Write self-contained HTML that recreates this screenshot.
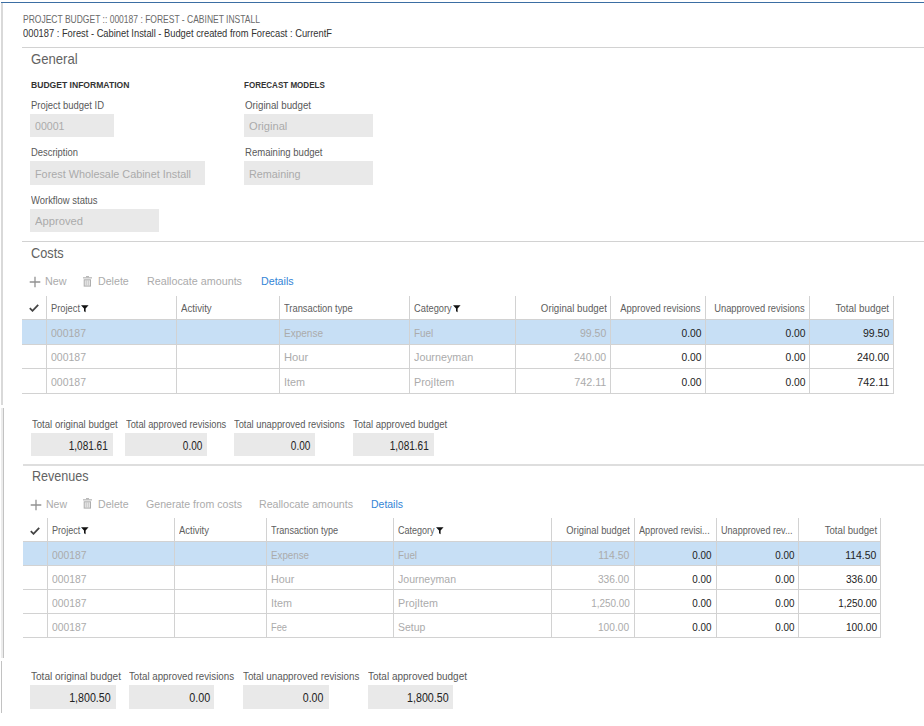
<!DOCTYPE html>
<html lang="en"><head><meta charset="utf-8"><title>Project budget :: 000187 : Forest - Cabinet Install</title>
<style>
html,body{margin:0;padding:0;background:#fff;}
body{width:924px;height:726px;position:relative;overflow:hidden;font-family:"Liberation Sans",Arial,sans-serif;}
.b{position:absolute;}
.t{position:absolute;white-space:nowrap;line-height:1;display:inline-block;}
.l{transform-origin:0 50%;}
.r{transform-origin:100% 50%;}
</style></head><body>
<div aria-label="Form frame">
<div class="b" style="left:1px;top:2px;width:923px;height:1px;background:#3b6ea3;"></div>
<div class="b" style="left:1px;top:3px;width:2px;height:402px;background:#d9d9d9;"></div>
<div class="b" style="left:1px;top:408px;width:2px;height:250px;background:#ececec;"></div>
<div class="b" style="left:3px;top:408px;width:1px;height:250px;background:#c2c2c2;"></div>
<div class="b" style="left:1px;top:661px;width:1px;height:52px;background:#c2c2c2;"></div>
</div>
<header aria-label="Project budget title">
<span id="t0" class="t l" style="font-size:10.3px;color:#6a6a6a;top:15px;left:22.50px;transform:scaleX(0.8261);">PROJECT BUDGET :: 000187 : FOREST - CABINET INSTALL</span>
<span id="t1" class="t l" style="font-size:10.3px;color:#333;top:29px;left:22.50px;transform:scaleX(0.9059);">000187 : Forest - Cabinet Install - Budget created from Forecast : CurrentF</span>
<div class="b" style="left:22px;top:47px;width:902px;height:1px;background:#d2d2d2;"></div>
</header>
<section aria-label="General">
<span id="t2" class="t l" style="font-size:15px;color:#626262;top:51px;left:30.80px;transform:scaleX(0.8749);">General</span>
<span id="t3" class="t l" style="font-size:9.5px;color:#333;top:80px;font-weight:700;left:30.80px;transform:scaleX(0.9021);">BUDGET INFORMATION</span>
<span id="t4" class="t l" style="font-size:9.5px;color:#333;top:80px;font-weight:700;left:244.20px;transform:scaleX(0.8458);">FORECAST MODELS</span>
<span id="t5" class="t l" style="font-size:10px;color:#595959;top:101px;left:30.50px;transform:scaleX(0.9448);">Project budget ID</span>
<div class="b" style="left:30px;top:114px;width:84px;height:23px;background:#e9e9e9;"></div>
<span id="t6" class="t l" style="font-size:11px;color:#ababab;top:121px;left:35.20px;transform:scaleX(0.9642);">00001</span>
<span id="t7" class="t l" style="font-size:10px;color:#595959;top:148px;left:30.50px;transform:scaleX(0.9394);">Description</span>
<div class="b" style="left:30px;top:161px;width:175px;height:24px;background:#e9e9e9;"></div>
<span id="t8" class="t l" style="font-size:11px;color:#ababab;top:169px;left:35.20px;transform:scaleX(0.9851);">Forest Wholesale Cabinet Install</span>
<span id="t9" class="t l" style="font-size:10px;color:#595959;top:196px;left:30.50px;transform:scaleX(0.9447);">Workflow status</span>
<div class="b" style="left:30px;top:209px;width:129px;height:23px;background:#e9e9e9;"></div>
<span id="t10" class="t l" style="font-size:11px;color:#ababab;top:216px;left:35.20px;transform:scaleX(1.0192);">Approved</span>
<span id="t11" class="t l" style="font-size:10px;color:#595959;top:101px;left:244.50px;transform:scaleX(0.9730);">Original budget</span>
<div class="b" style="left:244px;top:114px;width:129px;height:23px;background:#e9e9e9;"></div>
<span id="t12" class="t l" style="font-size:11px;color:#ababab;top:121px;left:249.20px;transform:scaleX(1.0104);">Original</span>
<span id="t13" class="t l" style="font-size:10px;color:#595959;top:148px;left:244.50px;transform:scaleX(0.9548);">Remaining budget</span>
<div class="b" style="left:244px;top:161px;width:129px;height:24px;background:#e9e9e9;"></div>
<span id="t14" class="t l" style="font-size:11px;color:#ababab;top:169px;left:249.20px;transform:scaleX(0.9811);">Remaining</span>
<div class="b" style="left:22px;top:241px;width:902px;height:1px;background:#d2d2d2;"></div>
</section>
<section aria-label="Costs">
<span id="t15" class="t l" style="font-size:15px;color:#626262;top:245px;left:30.70px;transform:scaleX(0.8502);">Costs</span>
<svg class="b" style="left:28.700000000000003px;top:275.5px" width="12" height="12" viewBox="0 0 12 12"><path d="M6 0.7V11.3M0.7 6H11.3" stroke="#929292" stroke-width="1.3" fill="none"/></svg>
<span id="t16" class="t l" style="font-size:11px;color:#ababab;top:276px;left:45.10px;transform:scaleX(0.9811);">New</span>
<svg class="b" style="left:83.2px;top:275.5px" width="9" height="11" viewBox="0 0 9 11"><path d="M3 0h3v1.2H3z" fill="#b9b9b9"/><path d="M0 1.3h9v1.1H0z" fill="#adadad"/><rect x="1.2" y="3.8" width="6.3" height="6.3" fill="#e6e6e6" stroke="#adadad" stroke-width="1"/><path d="M3.3 4.3v5.3M5.4 4.3v5.3" stroke="#c4c4c4" stroke-width="0.8"/></svg>
<span id="t17" class="t l" style="font-size:11px;color:#ababab;top:276px;left:98.00px;transform:scaleX(0.9686);">Delete</span>
<span id="t18" class="t l" style="font-size:11px;color:#ababab;top:276px;left:147.30px;transform:scaleX(0.9770);">Reallocate amounts</span>
<span id="t19" class="t l" style="font-size:11px;color:#3384d6;top:276px;left:260.70px;transform:scaleX(0.9695);">Details</span>
<div class="b" style="left:22px;top:319px;width:872px;height:25px;background:#c7dff5;"></div>
<div class="b" style="left:22px;top:319px;width:872px;height:1px;background:#d2d2d2;"></div>
<div class="b" style="left:22px;top:344px;width:872px;height:1px;background:#d2d2d2;"></div>
<div class="b" style="left:22px;top:368px;width:872px;height:1px;background:#d2d2d2;"></div>
<div class="b" style="left:22px;top:393px;width:872px;height:1px;background:#d2d2d2;"></div>
<div class="b" style="left:46px;top:296px;width:1px;height:98px;background:#d2d2d2;"></div>
<div class="b" style="left:176px;top:296px;width:1px;height:98px;background:#d2d2d2;"></div>
<div class="b" style="left:279px;top:296px;width:1px;height:98px;background:#d2d2d2;"></div>
<div class="b" style="left:409px;top:296px;width:1px;height:98px;background:#d2d2d2;"></div>
<div class="b" style="left:515px;top:296px;width:1px;height:98px;background:#d2d2d2;"></div>
<div class="b" style="left:610px;top:296px;width:1px;height:98px;background:#d2d2d2;"></div>
<div class="b" style="left:705px;top:296px;width:1px;height:98px;background:#d2d2d2;"></div>
<div class="b" style="left:809px;top:296px;width:1px;height:98px;background:#d2d2d2;"></div>
<div class="b" style="left:893px;top:296px;width:1px;height:98px;background:#d2d2d2;"></div>
<svg class="b" style="left:29.2px;top:304px" width="10" height="8" viewBox="0 0 10 8"><path d="M0.8 4.2 L3.5 6.8 L9.2 0.8" stroke="#444" stroke-width="1.8" fill="none"/></svg>
<span id="t20" class="t l" style="font-size:10.3px;color:#606060;top:304px;left:51.00px;transform:scaleX(0.9045);">Project</span>
<svg class="b" style="left:81.2px;top:304.9px" width="8" height="8" viewBox="0 0 8 8"><path d="M0 0.2H7.6L4.6 3.6V7.2L3 6.2V3.6Z" fill="#111"/></svg>
<span id="t21" class="t l" style="font-size:10.3px;color:#606060;top:304px;left:181.00px;transform:scaleX(0.9410);">Activity</span>
<span id="t22" class="t l" style="font-size:10.3px;color:#606060;top:304px;left:284.30px;transform:scaleX(0.9069);">Transaction type</span>
<span id="t23" class="t l" style="font-size:10.3px;color:#606060;top:304px;left:414.00px;transform:scaleX(0.9023);">Category</span>
<svg class="b" style="left:452.6px;top:304.9px" width="8" height="8" viewBox="0 0 8 8"><path d="M0 0.2H7.6L4.6 3.6V7.2L3 6.2V3.6Z" fill="#111"/></svg>
<span id="t24" class="t r" style="font-size:10.3px;color:#606060;top:304px;right:317.50px;transform:scaleX(0.9450);">Original budget</span>
<span id="t25" class="t r" style="font-size:10.3px;color:#606060;top:304px;right:223.00px;transform:scaleX(0.9169);">Approved revisions</span>
<span id="t26" class="t r" style="font-size:10.3px;color:#606060;top:304px;right:119.30px;transform:scaleX(0.9077);">Unapproved revisions</span>
<span id="t27" class="t r" style="font-size:10.3px;color:#606060;top:304px;right:34.80px;transform:scaleX(0.9571);">Total budget</span>
<span id="t28" class="t l" style="font-size:10.5px;color:#ababab;top:328px;left:51.00px;transform:scaleX(0.9987);">000187</span>
<span id="t29" class="t l" style="font-size:10.5px;color:#ababab;top:328px;left:284.30px;transform:scaleX(0.9541);">Expense</span>
<span id="t30" class="t l" style="font-size:10.5px;color:#ababab;top:328px;left:414.00px;transform:scaleX(0.9443);">Fuel</span>
<span id="t31" class="t r" style="font-size:10.5px;color:#ababab;top:328px;right:317.50px;transform:scaleX(1.0007);">99.50</span>
<span id="t32" class="t r" style="font-size:10.5px;color:#222;top:328px;right:223.00px;transform:scaleX(0.9786);">0.00</span>
<span id="t33" class="t r" style="font-size:10.5px;color:#222;top:328px;right:119.00px;transform:scaleX(0.9786);">0.00</span>
<span id="t34" class="t r" style="font-size:10.5px;color:#222;top:328px;right:34.80px;transform:scaleX(1.0007);">99.50</span>
<span id="t35" class="t l" style="font-size:10.5px;color:#ababab;top:352px;left:51.00px;transform:scaleX(0.9987);">000187</span>
<span id="t36" class="t l" style="font-size:10.5px;color:#ababab;top:352px;left:284.30px;transform:scaleX(1.0674);">Hour</span>
<span id="t37" class="t l" style="font-size:10.5px;color:#ababab;top:352px;left:414.00px;transform:scaleX(1.0263);">Journeyman</span>
<span id="t38" class="t r" style="font-size:10.5px;color:#ababab;top:352px;right:317.50px;transform:scaleX(1.0023);">240.00</span>
<span id="t39" class="t r" style="font-size:10.5px;color:#222;top:352px;right:223.00px;transform:scaleX(0.9786);">0.00</span>
<span id="t40" class="t r" style="font-size:10.5px;color:#222;top:352px;right:119.00px;transform:scaleX(0.9786);">0.00</span>
<span id="t41" class="t r" style="font-size:10.5px;color:#222;top:352px;right:34.80px;transform:scaleX(1.0023);">240.00</span>
<span id="t42" class="t l" style="font-size:10.5px;color:#ababab;top:377px;left:51.00px;transform:scaleX(0.9987);">000187</span>
<span id="t43" class="t l" style="font-size:10.5px;color:#ababab;top:377px;left:284.30px;transform:scaleX(1.0283);">Item</span>
<span id="t44" class="t l" style="font-size:10.5px;color:#ababab;top:377px;left:414.00px;transform:scaleX(1.0309);">ProjItem</span>
<span id="t45" class="t r" style="font-size:10.5px;color:#ababab;top:377px;right:317.50px;transform:scaleX(1.0273);">742.11</span>
<span id="t46" class="t r" style="font-size:10.5px;color:#222;top:377px;right:223.00px;transform:scaleX(0.9786);">0.00</span>
<span id="t47" class="t r" style="font-size:10.5px;color:#222;top:377px;right:119.00px;transform:scaleX(0.9786);">0.00</span>
<span id="t48" class="t r" style="font-size:10.5px;color:#222;top:377px;right:34.80px;transform:scaleX(1.0273);">742.11</span>
<span id="t49" class="t l" style="font-size:10px;color:#595959;top:420px;left:31.60px;transform:scaleX(0.9574);">Total original budget</span>
<div class="b" style="left:31px;top:433px;width:82px;height:23px;background:#e9e9e9;"></div>
<span id="t50" class="t r" style="font-size:12px;color:#222;top:440px;right:816.30px;transform:scaleX(0.8348);">1,081.61</span>
<span id="t51" class="t l" style="font-size:10px;color:#595959;top:420px;left:125.50px;transform:scaleX(0.9291);">Total approved revisions</span>
<div class="b" style="left:125px;top:433px;width:82px;height:23px;background:#e9e9e9;"></div>
<span id="t52" class="t r" style="font-size:12px;color:#222;top:440px;right:722.00px;transform:scaleX(0.8348);">0.00</span>
<span id="t53" class="t l" style="font-size:10px;color:#595959;top:420px;left:234.00px;transform:scaleX(0.9297);">Total unapproved revisions</span>
<div class="b" style="left:234px;top:433px;width:81px;height:23px;background:#e9e9e9;"></div>
<span id="t54" class="t r" style="font-size:12px;color:#222;top:440px;right:614.00px;transform:scaleX(0.8348);">0.00</span>
<span id="t55" class="t l" style="font-size:10px;color:#595959;top:420px;left:353.10px;transform:scaleX(0.9508);">Total approved budget</span>
<div class="b" style="left:353px;top:433px;width:81px;height:23px;background:#e9e9e9;"></div>
<span id="t56" class="t r" style="font-size:12px;color:#222;top:440px;right:494.90px;transform:scaleX(0.8348);">1,081.61</span>
<div class="b" style="left:23px;top:464px;width:901px;height:2px;background:#dedede;"></div>
</section>
<section aria-label="Revenues">
<span id="t57" class="t l" style="font-size:15px;color:#626262;top:468px;left:31.70px;transform:scaleX(0.8379);">Revenues</span>
<svg class="b" style="left:29.5px;top:498.5px" width="12" height="12" viewBox="0 0 12 12"><path d="M6 0.7V11.3M0.7 6H11.3" stroke="#929292" stroke-width="1.3" fill="none"/></svg>
<span id="t58" class="t l" style="font-size:11px;color:#ababab;top:499px;left:45.70px;transform:scaleX(0.9539);">New</span>
<svg class="b" style="left:83.4px;top:498.2px" width="9" height="11" viewBox="0 0 9 11"><path d="M3 0h3v1.2H3z" fill="#b9b9b9"/><path d="M0 1.3h9v1.1H0z" fill="#adadad"/><rect x="1.2" y="3.8" width="6.3" height="6.3" fill="#e6e6e6" stroke="#adadad" stroke-width="1"/><path d="M3.3 4.3v5.3M5.4 4.3v5.3" stroke="#c4c4c4" stroke-width="0.8"/></svg>
<span id="t59" class="t l" style="font-size:11px;color:#ababab;top:499px;left:97.70px;transform:scaleX(0.9624);">Delete</span>
<span id="t60" class="t l" style="font-size:11px;color:#ababab;top:499px;left:145.70px;transform:scaleX(0.9633);">Generate from costs</span>
<span id="t61" class="t l" style="font-size:11px;color:#ababab;top:499px;left:259.30px;transform:scaleX(0.9667);">Reallocate amounts</span>
<span id="t62" class="t l" style="font-size:11px;color:#3384d6;top:499px;left:370.70px;transform:scaleX(0.9517);">Details</span>
<div class="b" style="left:23px;top:541px;width:858px;height:24px;background:#c7dff5;"></div>
<div class="b" style="left:23px;top:541px;width:858px;height:1px;background:#d2d2d2;"></div>
<div class="b" style="left:23px;top:565px;width:858px;height:1px;background:#d2d2d2;"></div>
<div class="b" style="left:23px;top:589px;width:858px;height:1px;background:#d2d2d2;"></div>
<div class="b" style="left:23px;top:613px;width:858px;height:1px;background:#d2d2d2;"></div>
<div class="b" style="left:23px;top:637px;width:858px;height:1px;background:#d2d2d2;"></div>
<div class="b" style="left:47px;top:518px;width:1px;height:120px;background:#d2d2d2;"></div>
<div class="b" style="left:174px;top:518px;width:1px;height:120px;background:#d2d2d2;"></div>
<div class="b" style="left:266px;top:518px;width:1px;height:120px;background:#d2d2d2;"></div>
<div class="b" style="left:393px;top:518px;width:1px;height:120px;background:#d2d2d2;"></div>
<div class="b" style="left:551px;top:518px;width:1px;height:120px;background:#d2d2d2;"></div>
<div class="b" style="left:634px;top:518px;width:1px;height:120px;background:#d2d2d2;"></div>
<div class="b" style="left:716px;top:518px;width:1px;height:120px;background:#d2d2d2;"></div>
<div class="b" style="left:798px;top:518px;width:1px;height:120px;background:#d2d2d2;"></div>
<div class="b" style="left:880px;top:518px;width:1px;height:120px;background:#d2d2d2;"></div>
<svg class="b" style="left:30.2px;top:526.6px" width="10" height="8" viewBox="0 0 10 8"><path d="M0.8 4.2 L3.5 6.8 L9.2 0.8" stroke="#444" stroke-width="1.8" fill="none"/></svg>
<span id="t63" class="t l" style="font-size:10.3px;color:#606060;top:526px;left:51.70px;transform:scaleX(0.8827);">Project</span>
<svg class="b" style="left:81.3px;top:527.3px" width="8" height="8" viewBox="0 0 8 8"><path d="M0 0.2H7.6L4.6 3.6V7.2L3 6.2V3.6Z" fill="#111"/></svg>
<span id="t64" class="t l" style="font-size:10.3px;color:#606060;top:526px;left:178.80px;transform:scaleX(0.9195);">Activity</span>
<span id="t65" class="t l" style="font-size:10.3px;color:#606060;top:526px;left:271.00px;transform:scaleX(0.8871);">Transaction type</span>
<span id="t66" class="t l" style="font-size:10.3px;color:#606060;top:526px;left:397.70px;transform:scaleX(0.8760);">Category</span>
<svg class="b" style="left:435.6px;top:527.3px" width="8" height="8" viewBox="0 0 8 8"><path d="M0 0.2H7.6L4.6 3.6V7.2L3 6.2V3.6Z" fill="#111"/></svg>
<span id="t67" class="t r" style="font-size:10.3px;color:#606060;top:526px;right:294.60px;transform:scaleX(0.9106);">Original budget</span>
<span id="t68" class="t l" style="font-size:10.3px;color:#606060;top:526px;left:638.90px;transform:scaleX(0.8886);">Approved revisi...</span>
<span id="t69" class="t l" style="font-size:10.3px;color:#606060;top:526px;left:721.20px;transform:scaleX(0.8817);">Unapproved rev...</span>
<span id="t70" class="t r" style="font-size:10.3px;color:#606060;top:526px;right:47.30px;transform:scaleX(0.9339);">Total budget</span>
<span id="t71" class="t l" style="font-size:10.5px;color:#ababab;top:550px;left:51.70px;transform:scaleX(0.9844);">000187</span>
<span id="t72" class="t l" style="font-size:10.5px;color:#ababab;top:550px;left:271.00px;transform:scaleX(0.9297);">Expense</span>
<span id="t73" class="t l" style="font-size:10.5px;color:#ababab;top:550px;left:397.70px;transform:scaleX(0.9297);">Fuel</span>
<span id="t74" class="t r" style="font-size:10.5px;color:#ababab;top:550px;right:294.60px;transform:scaleX(0.9954);">114.50</span>
<span id="t75" class="t r" style="font-size:10.5px;color:#222;top:550px;right:212.30px;transform:scaleX(0.9394);">0.00</span>
<span id="t76" class="t r" style="font-size:10.5px;color:#222;top:550px;right:129.60px;transform:scaleX(0.9394);">0.00</span>
<span id="t77" class="t r" style="font-size:10.5px;color:#222;top:550px;right:47.30px;transform:scaleX(0.9954);">114.50</span>
<span id="t78" class="t l" style="font-size:10.5px;color:#ababab;top:574px;left:51.70px;transform:scaleX(0.9844);">000187</span>
<span id="t79" class="t l" style="font-size:10.5px;color:#ababab;top:574px;left:271.00px;transform:scaleX(1.0235);">Hour</span>
<span id="t80" class="t l" style="font-size:10.5px;color:#ababab;top:574px;left:397.70px;transform:scaleX(1.0038);">Journeyman</span>
<span id="t81" class="t r" style="font-size:10.5px;color:#ababab;top:574px;right:294.60px;transform:scaleX(0.9712);">336.00</span>
<span id="t82" class="t r" style="font-size:10.5px;color:#222;top:574px;right:212.30px;transform:scaleX(0.9394);">0.00</span>
<span id="t83" class="t r" style="font-size:10.5px;color:#222;top:574px;right:129.60px;transform:scaleX(0.9394);">0.00</span>
<span id="t84" class="t r" style="font-size:10.5px;color:#222;top:574px;right:47.30px;transform:scaleX(0.9712);">336.00</span>
<span id="t85" class="t l" style="font-size:10.5px;color:#ababab;top:598px;left:51.70px;transform:scaleX(0.9844);">000187</span>
<span id="t86" class="t l" style="font-size:10.5px;color:#ababab;top:598px;left:271.00px;transform:scaleX(1.0283);">Item</span>
<span id="t87" class="t l" style="font-size:10.5px;color:#ababab;top:598px;left:397.70px;transform:scaleX(1.0232);">ProjItem</span>
<span id="t88" class="t r" style="font-size:10.5px;color:#ababab;top:598px;right:294.60px;transform:scaleX(0.9468);">1,250.00</span>
<span id="t89" class="t r" style="font-size:10.5px;color:#222;top:598px;right:212.30px;transform:scaleX(0.9394);">0.00</span>
<span id="t90" class="t r" style="font-size:10.5px;color:#222;top:598px;right:129.60px;transform:scaleX(0.9394);">0.00</span>
<span id="t91" class="t r" style="font-size:10.5px;color:#222;top:598px;right:47.30px;transform:scaleX(0.9468);">1,250.00</span>
<span id="t92" class="t l" style="font-size:10.5px;color:#ababab;top:622px;left:51.70px;transform:scaleX(0.9844);">000187</span>
<span id="t93" class="t l" style="font-size:10.5px;color:#ababab;top:622px;left:271.00px;transform:scaleX(0.8843);">Fee</span>
<span id="t94" class="t l" style="font-size:10.5px;color:#ababab;top:622px;left:397.70px;transform:scaleX(0.9944);">Setup</span>
<span id="t95" class="t r" style="font-size:10.5px;color:#ababab;top:622px;right:294.60px;transform:scaleX(0.9712);">100.00</span>
<span id="t96" class="t r" style="font-size:10.5px;color:#222;top:622px;right:212.30px;transform:scaleX(0.9394);">0.00</span>
<span id="t97" class="t r" style="font-size:10.5px;color:#222;top:622px;right:129.60px;transform:scaleX(0.9394);">0.00</span>
<span id="t98" class="t r" style="font-size:10.5px;color:#222;top:622px;right:47.30px;transform:scaleX(0.9712);">100.00</span>
<span id="t99" class="t l" style="font-size:10.5px;color:#595959;top:671px;left:30.70px;transform:scaleX(0.9576);">Total original budget</span>
<div class="b" style="left:30px;top:685px;width:86px;height:24px;background:#e9e9e9;"></div>
<span id="t100" class="t r" style="font-size:12.5px;color:#222;top:692px;right:813.00px;transform:scaleX(0.8526);">1,800.50</span>
<span id="t101" class="t l" style="font-size:10.5px;color:#595959;top:671px;left:129.30px;transform:scaleX(0.9273);">Total approved revisions</span>
<div class="b" style="left:129px;top:685px;width:85px;height:24px;background:#e9e9e9;"></div>
<span id="t102" class="t r" style="font-size:12.5px;color:#222;top:692px;right:714.00px;transform:scaleX(0.8626);">0.00</span>
<span id="t103" class="t l" style="font-size:10.5px;color:#595959;top:671px;left:242.70px;transform:scaleX(0.9310);">Total unapproved revisions</span>
<div class="b" style="left:243px;top:685px;width:86px;height:24px;background:#e9e9e9;"></div>
<span id="t104" class="t r" style="font-size:12.5px;color:#222;top:692px;right:600.70px;transform:scaleX(0.8462);">0.00</span>
<span id="t105" class="t l" style="font-size:10.5px;color:#595959;top:671px;left:367.70px;transform:scaleX(0.9526);">Total approved budget</span>
<div class="b" style="left:368px;top:685px;width:85px;height:24px;background:#e9e9e9;"></div>
<span id="t106" class="t r" style="font-size:12.5px;color:#222;top:692px;right:475.70px;transform:scaleX(0.8547);">1,800.50</span>
</section>
</body></html>
